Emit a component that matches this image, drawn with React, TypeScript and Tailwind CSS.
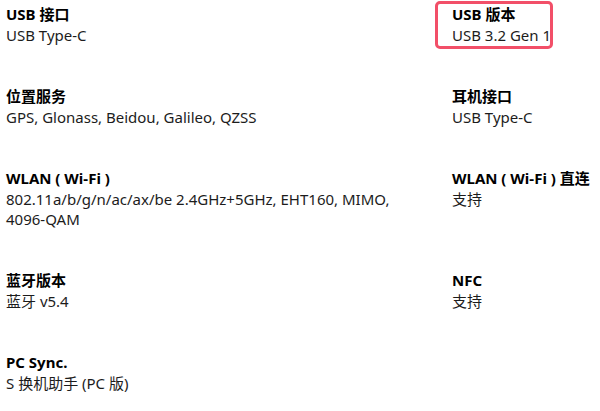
const specs = [
  { label: 'USB 接口', value: 'USB Type-C' },
  { label: 'USB 版本', value: 'USB 3.2 Gen 1', highlight: true },
  { label: '位置服务', value: 'GPS, Glonass, Beidou, Galileo, QZSS' },
  { label: '耳机接口', value: 'USB Type-C' },
  { label: 'WLAN ( Wi-Fi )', value: '802.11a/b/g/n/ac/ax/be 2.4GHz+5GHz, EHT160, MIMO, 4096-QAM' },
  { label: 'WLAN ( Wi-Fi ) 直连', value: '支持' },
  { label: '蓝牙版本', value: '蓝牙 v5.4' },
  { label: 'NFC', value: '支持' },
  { label: 'PC Sync.', value: 'S 换机助手 (PC 版)' },
];

export default function App() {
  return (
    <div
      className="w-[600px] h-[411px] overflow-hidden bg-white pl-[6px] pt-[3px]"
      style={{ fontFamily: '"Noto Sans", "Noto Sans CJK SC", sans-serif' }}
    >
      <div className="grid grid-cols-[446px_1fr] gap-y-[40px]">
        {specs.map((s) => (
          <div key={s.label} className="relative pr-6">
            <p className="text-[15px] leading-[22px] font-bold text-black whitespace-nowrap">{s.label}</p>
            <p className="text-[15px] leading-[20px] text-[#1c1c1c]">{s.value}</p>
            {s.highlight && (
              <div className="absolute left-[-17px] top-[-2px] w-[118px] h-[48px] border-[3px] border-[#f24f68] rounded-[5px]" />
            )}
          </div>
        ))}
      </div>
    </div>
  );
}
